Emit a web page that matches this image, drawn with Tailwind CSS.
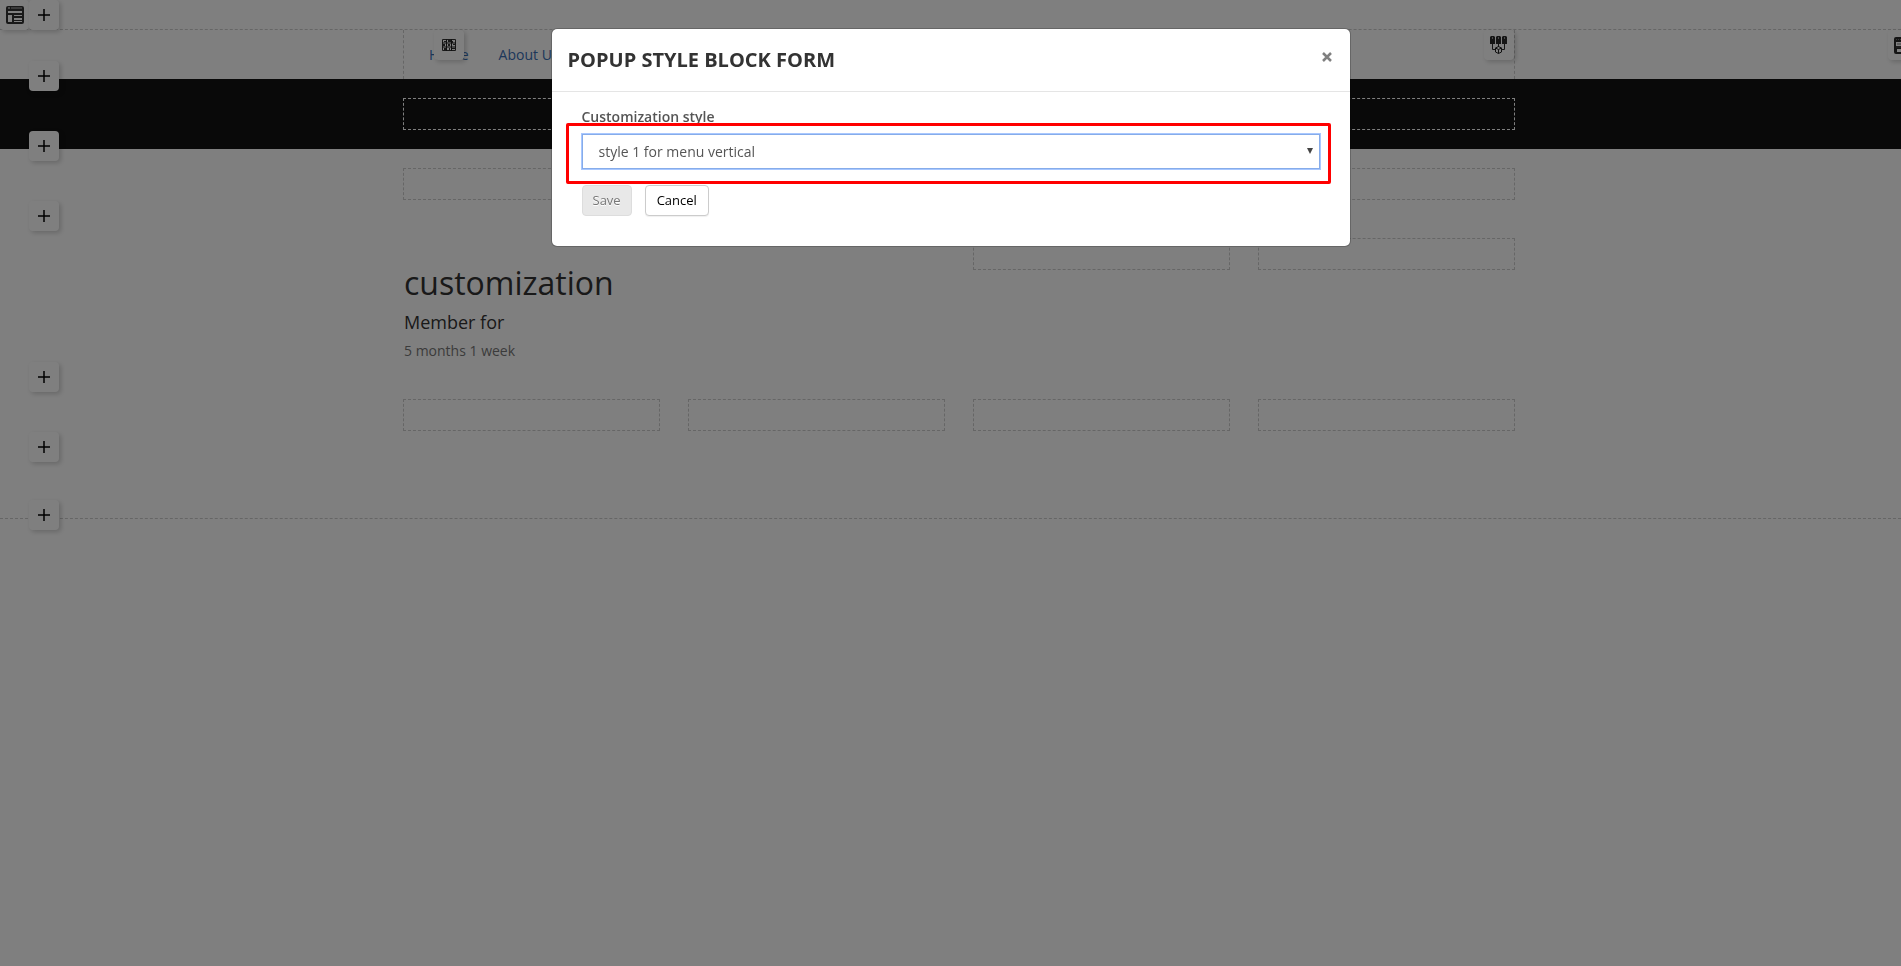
<!DOCTYPE html>
<html lang="en">
<head>
  <meta charset="UTF-8">
  <meta name="viewport" content="width=device-width, initial-scale=1.0">
  <title>customization</title>
  <script src="https://cdn.jsdelivr.net/npm/@tailwindcss/browser@4"></script>
</head>
<body class="min-h-screen overflow-x-hidden bg-white font-['Open_Sans',sans-serif] text-sm text-[#777777]">

  <svg class="hidden">
    <symbol id="plus" viewBox="0 0 14 14">
      <path d="M7 1v12M1 7h12" fill="none" stroke="#000" stroke-width="1.5"/>
    </symbol>
    <symbol id="layout" viewBox="0 0 18 18">
      <path d="M2 0h14a2 2 0 0 1 2 2v14a2 2 0 0 1-2 2H2a2 2 0 0 1-2-2V2a2 2 0 0 1 2-2z" fill="#333"/>
      <path d="M2 1h2v2H2z" fill="#999"/>
      <path d="M5 1h11v2H5z" fill="#777"/>
      <path d="M2 5h14v2H2zM2 9h4v7H2zM8 9h8v1H8zM8 12h8v2H8zM8 15h8v1H8z" fill="#fff"/>
    </symbol>
    <symbol id="row" viewBox="0 0 18 17">
      <path d="M2 0h14a2 2 0 0 1 2 2v13a2 2 0 0 1-2 2H2a2 2 0 0 1-2-2V2a2 2 0 0 1 2-2z" fill="#2a2a2a"/>
      <path d="M2 2h1v1H2zM4 2h1v1H4zM6 2h1v1H6zM8 2h8v1H8z" fill="#777"/>
      <path d="M2 5h14v4H2zM3 12h12v3H3z" fill="#fff"/>
      <path d="M3 7h12" stroke="#777"/>
      <path d="M2 10h14" stroke="#555"/>
    </symbol>
    <symbol id="blocks" viewBox="0 0 14 12">
      <path d="M.5.5h13v11H.5z" fill="none" stroke="#333"/>
      <path d="M0 4h14M0 8h14M4.500 0v12M9.500 0v12" fill="none" stroke="#222"/>
      <path d="M2 2h2v1H2zM6 1h3v2H6zM10 2h1v2h-1zM1 5h2v2H1zM6 5h2v2H6zM11 5h2v1h-2zM2 9h2v2H2zM7 9h1v2H7zM10 9h3v1h-3z" fill="#333"/>
    </symbol>
    <symbol id="menu-tree" viewBox="0 0 18 18">
      <path d="M1 0h3l1 1v7H0V1zM7 0h3l1 1v7H6V1zM13 0h3l1 1v7h-5V1z" fill="#2a2a2a"/>
      <path d="M2 1h1v2H2zM8 1h1v2H8zM14 1h1v2h-1z" fill="#999"/>
      <path d="M2.500 8v5.500h3M14.500 8v5.500h-3M8.500 8v3" fill="none" stroke="#2a2a2a"/>
      <path d="M8.500 10.500l3 1.500v4l-3 1.500-3-1.500v-4zM5.500 12l3 1.500 3-1.500M8.500 13.500v4" fill="none" stroke="#222"/>
    </symbol>
  </svg>

  <main class="flex flex-col">
    <div class="flex h-[29px]">
      <button class="relative z-10 grid h-[30px] w-[29px] shrink-0 place-items-center rounded-sm bg-white shadow-[2px_2px_5px_#00000030]" aria-label="Layout"><svg class="size-[18px]"><use href="#layout"/></svg></button>
      <button class="relative z-10 grid size-[30px] shrink-0 place-items-center rounded-sm bg-white shadow-[2px_2px_5px_#00000030]" aria-label="Add section"><svg class="size-[14px]"><use href="#plus"/></svg></button>
    </div>

    <header class="relative h-[50px] border-t border-dashed border-[#cccccc] pl-[17px]">
      <div class="relative mx-auto flex h-full max-w-[1112px] items-start border-x border-dashed border-[#cccccc]">
        <nav class="flex gap-[30px] pt-[15px] pl-[25px] leading-5">
          <a href="#" class="text-[#3a6fb5]">Home</a>
          <a href="#" class="text-[#3a6fb5]">About US</a>
        </nav>
        <button class="absolute top-0 left-[30px] grid size-[30px] place-items-center rounded-sm bg-white shadow-[2px_2px_5px_#00000030]" aria-label="Edit menu block"><svg class="h-3 w-[14px]"><use href="#blocks"/></svg></button>
        <button class="absolute top-0 right-0 grid size-[30px] place-items-center rounded-sm bg-white shadow-[2px_2px_5px_#00000030]" aria-label="Edit columns"><svg class="size-[18px]"><use href="#menu-tree"/></svg></button>
      </div>
      <button class="absolute top-0 -right-[17px] grid size-[30px] place-items-center rounded-sm bg-white shadow-[2px_2px_5px_#00000030]" aria-label="Edit row"><svg class="h-[17px] w-[18px]"><use href="#row"/></svg></button>
      <button class="absolute -bottom-3 left-[29px] z-10 grid size-[30px] place-items-center rounded-sm bg-white shadow-[2px_2px_5px_#00000030]" aria-label="Add section"><svg class="size-[14px]"><use href="#plus"/></svg></button>
    </header>

    <section class="relative bg-[#121212] py-[19px] pl-[17px]">
      <div class="mx-auto h-8 max-w-[1112px] border border-dashed border-white"></div>
      <button class="absolute -bottom-3 left-[29px] z-10 grid size-[30px] place-items-center rounded-sm bg-white shadow-[2px_2px_5px_#00000030]" aria-label="Add section"><svg class="size-[14px]"><use href="#plus"/></svg></button>
    </section>

    <section class="relative py-[19px] pl-[17px]">
      <div class="mx-auto h-8 max-w-[1112px] border border-dashed border-[#cccccc]"></div>
      <button class="absolute -bottom-3 left-[29px] z-10 grid size-[30px] place-items-center rounded-sm bg-white shadow-[2px_2px_5px_#00000030]" aria-label="Add section"><svg class="size-[14px]"><use href="#plus"/></svg></button>
    </section>

    <section class="relative pt-[19px] pb-[17px] pl-[17px]">
      <div class="mx-auto grid max-w-[1112px] grid-cols-4 gap-7">
        <article class="col-span-2 pt-[25px] pl-px">
          <h1 class="text-[32px] leading-10 text-[#333333]">customization</h1>
          <h4 class="pt-[7px] text-lg leading-6 text-[#333333]">Member for</h4>
          <p class="pt-[5px] leading-6">5 months 1 week</p>
        </article>
        <div class="h-8 border border-dashed border-[#cccccc]"></div>
        <div class="h-8 border border-dashed border-[#cccccc]"></div>
      </div>
      <button class="absolute -bottom-3 left-[29px] z-10 grid size-[30px] place-items-center rounded-sm bg-white shadow-[2px_2px_5px_#00000030]" aria-label="Add section"><svg class="size-[14px]"><use href="#plus"/></svg></button>
    </section>

    <section class="relative py-[19px] pl-[17px]">
      <div class="mx-auto grid max-w-[1112px] grid-cols-4 gap-7">
        <div class="h-8 border border-dashed border-[#cccccc]"></div>
        <div class="h-8 border border-dashed border-[#cccccc]"></div>
        <div class="h-8 border border-dashed border-[#cccccc]"></div>
        <div class="h-8 border border-dashed border-[#cccccc]"></div>
      </div>
      <button class="absolute -bottom-3 left-[29px] z-10 grid size-[30px] place-items-center rounded-sm bg-white shadow-[2px_2px_5px_#00000030]" aria-label="Add section"><svg class="size-[14px]"><use href="#plus"/></svg></button>
    </section>

    <footer class="relative h-[69px] border-b border-dashed border-[#cccccc]">
      <button class="absolute -bottom-3 left-[29px] z-10 grid size-[30px] place-items-center rounded-sm bg-white shadow-[2px_2px_5px_#00000030]" aria-label="Add section"><svg class="size-[14px]"><use href="#plus"/></svg></button>
    </footer>
  </main>

  <div class="fixed inset-0 z-50 bg-black/50 pt-7">
    <div role="dialog" aria-modal="true" aria-labelledby="popup-title" class="mx-auto max-w-[800px] rounded-md border border-black/20 bg-white bg-clip-padding">
      <div class="flex items-start justify-between border-b border-[#e5e5e5] py-[17px] pr-[17px] pl-4">
        <h2 id="popup-title" class="text-xl leading-7 font-bold text-[#333333] uppercase">Popup style block form</h2>
        <button class="mt-[5px] grid size-3 place-items-center" aria-label="Close"><svg class="size-[10px]" viewBox="0 0 10 10"><path d="M1 1l8 8M9 1L1 9" fill="none" stroke="#808080" stroke-width="2.500"/></svg></button>
      </div>
      <form class="px-[30px] pt-[15px] pb-[30px]">
        <label for="style" class="block leading-5 font-semibold text-[#555555]">Customization style</label>
        <div class="relative mt-[7px] mb-4">
          <select id="style" class="block h-[35px] w-full appearance-none border border-[#86acea] bg-white px-4 text-sm text-[#555555] ring-1 ring-[#a9c8ff] outline-none">
            <option>style 1 for menu vertical</option>
          </select>
          <svg class="pointer-events-none absolute top-[14px] right-[7px] size-[6px]" viewBox="0 0 6 6"><path d="M0 0h6L3 6z" fill="#444"/></svg>
          <div class="pointer-events-none absolute -top-[11px] -right-[11px] -bottom-[15px] -left-4 rounded-xs border-3 border-[#ff0000]"></div>
        </div>
        <div class="flex gap-[13px]">
          <button type="button" disabled class="h-[31px] rounded-sm border border-[#dddddd] bg-[#e8e8e8] px-[10px] text-[13px] text-[#777777] text-shadow-[0_1px_0_#ffffff]">Save</button>
          <button type="button" class="h-[31px] rounded-sm border border-[#cccccc] bg-white px-[11px] text-[13px] text-black shadow-[0_1px_1px_#00000010]">Cancel</button>
        </div>
      </form>
    </div>
  </div>

</body>
</html>
